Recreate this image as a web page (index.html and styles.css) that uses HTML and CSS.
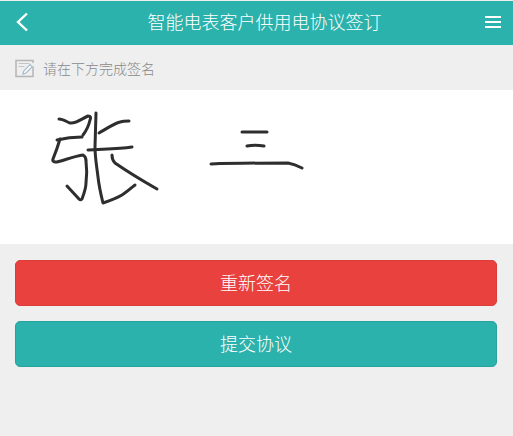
FILE: index.html
```html
<!DOCTYPE html>
<html lang="zh">
<head>
<meta charset="utf-8">
<title>智能电表客户供用电协议签订</title>
<link rel="stylesheet" href="styles.css">
</head>
<body>
<header class="topbar">
  <svg class="back" width="14" height="20" viewBox="0 0 14 20"><path d="M12 1.500 3 10l9 8.500" fill="none" stroke="#fff" stroke-width="2.400"/></svg>
  <h1 class="title">智能电表客户供用电协议签订</h1>
  <div class="menu"><span></span><span></span><span></span></div>
</header>
<div class="hint">
  <svg class="hint-icon" width="20" height="20" viewBox="0 0 20 20">
    <path d="M18 8.500v10H1v-16h17V5" fill="none" stroke="#b5b5b5" stroke-width="1.500"/>
    <path d="M3.500 5.500h11M3.500 8.500h6" stroke="#c4c4c4" stroke-width="1"/>
    <path d="M8 16l.8-3L15 6.500l2.200 2.200-6.200 6.300z" fill="#fff" stroke="#a3bccb" stroke-width="1.200"/>
  </svg>
  <span>请在下方完成签名</span>
</div>
<section class="pad">
  <svg class="ink" width="513" height="154" viewBox="0 90 513 154">
    <g fill="none" stroke="#2e2e2e" stroke-width="3" stroke-linecap="round" stroke-linejoin="round">
      <path d="M59 119c4 0 8 3 11 4 6 1 13-5 18-7 3 0 3 2 2 4-1 5-4 11-7 15"/>
      <path d="M57 140c8-2 17-3 25-3"/>
      <path d="M60 139c-2 7-5 15-7 20-1 3 2 3 4 3 8-2 18-6 26-7 2 1 3 3 3 6 1 8 1 15 0 22 0 4-1 8-4 16-1 1-2 1-3 0l-12-13"/>
      <path d="M96 113l-1 34c0 11 2 21 3 30 1 9 3 18 5 26 6-2 14-5 19-8 5-3 9-7 13-10"/>
      <path d="M99 133c7-4 14-9 21-11 3-1 6-1 9-1"/>
      <path d="M88 150c15-1 30-1 44-3"/>
      <path d="M112 155c0 4 1 6 3 8 13 9 28 18 42 26"/>
      <path d="M242 132h25"/>
      <path d="M247 146c5-1 11-1 17 0"/>
      <path d="M211 164c25-1 52-1 77-1 5 1 10 3 14 5"/>
    </g>
  </svg>
</section>
<div class="actions">
  <button class="btn btn-red" type="button">重新签名</button>
  <button class="btn btn-teal" type="button">提交协议</button>
</div>
</body>
</html>
```
FILE: styles.css
```css
* { box-sizing: border-box; }
html, body { margin: 0; padding: 0; }
body {
  width: 513px;
  height: 436px;
  overflow: hidden;
  background: #efefef;
  font-family: "Noto Sans CJK SC", "Liberation Sans", sans-serif;
}
.topbar {
  margin-top: 1px;
  height: 44px;
  background: #2bb2ac;
  display: flex;
  align-items: center;
  justify-content: space-between;
  padding: 0 12px 2px 15px;
  color: #fff;
}
.back { display: block; }
.title {
  margin: 0 0 2px;
  font-size: 18px;
  font-weight: 300;
  line-height: 24px;
  flex: 1;
  text-align: center;
  padding-left: 15px;
}
.menu {
  width: 16px;
  display: flex;
  flex-direction: column;
  gap: 3px;
}
.menu span { display: block; height: 2px; background: #fff; }
.hint {
  height: 45px;
  display: flex;
  align-items: center;
  gap: 8px;
  padding: 1px 0 0 15px;
  font-size: 14px;
  font-weight: 300;
  color: #888;
}
.hint-icon { display: block; }
.pad {
  height: 154px;
  background: #fff;
}
.ink { display: block; }
.actions {
  display: flex;
  flex-direction: column;
  gap: 15px;
  padding: 16px 16px 0 15px;
}
.btn {
  display: block;
  width: 100%;
  height: 46px;
  border-radius: 5px;
  border: 1px solid;
  color: #fff;
  font-family: inherit;
  font-size: 18px;
  font-weight: 300;
  line-height: 42px;
  padding: 0 0 3px;
}
.btn-red { background: #e9423e; border-color: #dc3d39; }
.btn-teal { background: #2bb2ac; border-color: #26a39d; }
```
